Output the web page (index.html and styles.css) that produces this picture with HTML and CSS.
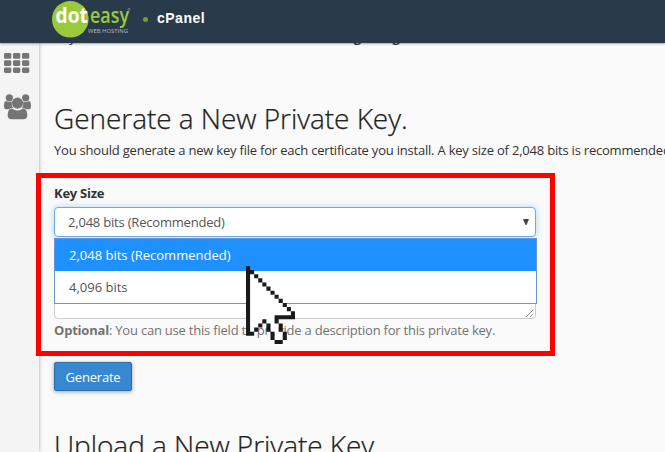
FILE: index.html
```html
<!DOCTYPE html>
<html lang="en">
<head>
    <meta charset="UTF-8">
    <meta name="viewport" content="width=device-width, initial-scale=1.0">
    <title>cPanel - Private Keys</title>
    <link rel="stylesheet" href="styles.css">
</head>
<body>
    <header class="navbar">
        <svg class="logo" width="82" height="40" viewBox="0 0 82 40">
            <circle cx="18.3" cy="19.3" r="18.3" fill="#9aca3c"/>
            <text class="logo-dot" x="3.5" y="22.5" textLength="32.5" lengthAdjust="spacingAndGlyphs">dot</text>
            <text class="logo-easy" x="38" y="22.5" textLength="39" lengthAdjust="spacingAndGlyphs">easy</text>
            <text class="logo-sub" x="36" y="33" textLength="40" lengthAdjust="spacingAndGlyphs">WEB HOSTING</text>
            <circle cx="77" cy="9.3" r="1.1" fill="none" stroke="#7d8790" stroke-width=".8"/>
        </svg>
        <span class="bullet"></span>
        <span class="brand">cPanel</span>
    </header>

    <div class="page">
        <nav class="sidebar">
            <svg width="26" height="21" viewBox="0 0 26 21" fill="#757575">
                <rect x="0" y="0" width="7.3" height="5.8" rx="1.4"/>
                <rect x="9" y="0" width="7.3" height="5.8" rx="1.4"/>
                <rect x="18" y="0" width="7.3" height="5.8" rx="1.4"/>
                <rect x="0" y="7.2" width="7.3" height="5.8" rx="1.4"/>
                <rect x="9" y="7.2" width="7.3" height="5.8" rx="1.4"/>
                <rect x="18" y="7.2" width="7.3" height="5.8" rx="1.4"/>
                <rect x="0" y="14.4" width="7.3" height="5.6" rx="1.4"/>
                <rect x="9" y="14.4" width="7.3" height="5.6" rx="1.4"/>
                <rect x="18" y="14.4" width="7.3" height="5.6" rx="1.4"/>
            </svg>
            <svg class="users" width="27" height="26" viewBox="0 0 27 26" fill="#757575">
                <circle cx="5.3" cy="3.8" r="3.6"/>
                <circle cx="21.7" cy="3.8" r="3.6"/>
                <path d="M2 7.1C3.6 8.4 6 8.4 8 7.4C7.4 9.6 7.8 12 9.2 13.7C7.3 13.8 5.9 14.4 5 15.3H2.8C1 15.3 0 14.4 0 12.7C0 10 .4 7.1 2 7.1Z"/>
                <path d="M25 7.1C23.4 8.4 21 8.4 19 7.4C19.6 9.6 19.2 12 17.8 13.7C19.7 13.8 21.1 14.4 22 15.3H24.2C26 15.3 27 14.4 27 12.7C27 10 26.6 7.1 25 7.1Z"/>
                <circle cx="13.5" cy="9.1" r="5.6"/>
                <path d="M8 14.5C11.3 17 15.7 17 19 14.5C22.3 14.5 23.3 18.2 23.3 21.6C23.3 24 21.8 25.3 19.6 25.3H7.4C5.2 25.3 3.7 24 3.7 21.6C3.7 18.2 4.7 14.5 8 14.5Z"/>
            </svg>
        </nav>

        <main class="content">
            <p class="key-list"><span>Key</span><strong>getting</strong></p>
            <h2>Generate a New Private Key.</h2>
            <p class="intro">You should generate a new key file for each certificate you install. A key size of 2,048 bits is recommended.</p>

            <section class="highlight">
                <label>Key Size</label>
                <div class="select">
                    <span>2,048 bits (Recommended)</span>
                    <svg width="6" height="6" viewBox="0 0 6 6"><path d="M0 0H6L3.5 6H2.5Z" fill="#444"/></svg>
                    <ul class="options">
                        <li class="selected">2,048 bits (Recommended)</li>
                        <li>4,096 bits</li>
                    </ul>
                </div>
                <div class="textarea">
                    <svg width="8" height="8" viewBox="0 0 8 8"><path d="M.5 7.5L7.5.5M4.5 7.5L7.5 4.5" stroke="#555" stroke-dasharray="1.1 .3"/></svg>
                </div>
                <p class="help"><strong>Optional</strong>: You can use this field to provide a description for this private key.</p>
                <svg class="cursor" width="49" height="78" viewBox="0 0 12 19" preserveAspectRatio="none">
                    <path d="M1 1L11 11V12H7V14H8V16H9V18H7V16H6V14H5V13H4V14H3V15H2V16H1Z" fill="#fff"/>
                    <path fill="#1a1a1a" d="M0 0H1V17H0ZM1 1h1v1h-1zM2 2h1v1h-1zM3 3h1v1h-1zM4 4h1v1h-1zM5 5h1v1h-1zM6 6h1v1h-1zM7 7h1v1h-1zM8 8h1v1h-1zM9 9h1v1h-1zM10 10h1v1h-1zM11 11h1v2h-1zM7 12h4v1h-4zM7 13h1v1h-1zM8 14h1v2h-1zM9 16h1v2h-1zM7 18h2v1h-2zM6 16h1v2h-1zM5 14h1v2h-1zM4 13h1v1h-1zM3 14h1v1h-1zM2 15h1v1h-1zM1 16h1v1h-1z"/>
                </svg>
            </section>

            <button class="btn">Generate</button>
            <h2 class="upload">Upload a New Private Key.</h2>
        </main>
    </div>
</body>
</html>
```
FILE: styles.css
```css
* {
    box-sizing: border-box;
    margin: 0;
    padding: 0;
}

body {
    width: 665px;
    height: 452px;
    overflow: hidden;
    background: #fafafa;
    color: #333;
    font-family: "Open Sans", sans-serif;
    font-size: 13px;
    line-height: 20px;
}

.navbar {
    position: relative;
    z-index: 2;
    display: flex;
    height: 43px;
    padding-left: 52px;
    background: #293a4a;
    box-shadow: 0 1px 2px rgba(0, 0, 0, .35);
}

.logo {
    flex: none;
}

.logo text {
    font-family: "Open Sans", sans-serif;
}

.logo-dot {
    fill: #fff;
    font-size: 21px;
    font-weight: 700;
}

.logo-easy {
    fill: #9aca3c;
    font-size: 21px;
    font-weight: 600;
}

.logo-sub {
    fill: #b5bcc3;
    font-size: 5.5px;
}

.bullet {
    width: 5px;
    height: 5px;
    margin: 17px 9px 0 9px;
    border-radius: 50%;
    background: #729f35;
}

.brand {
    margin-top: 8px;
    color: #fff;
    font-family: "Liberation Sans", Arial, sans-serif;
    font-size: 14px;
    font-weight: 700;
    letter-spacing: .5px;
}

.page {
    display: flex;
    height: 409px;
}

.sidebar {
    flex: none;
    width: 39px;
    padding: 10px 0 0 4px;
    background: #f4f4f4;
    box-shadow: 0 0 4px rgba(0, 0, 0, .35);
}

.sidebar svg {
    display: block;
}

.sidebar .users {
    margin-top: 20px;
}

.content {
    flex: 1;
    min-width: 0;
    padding-left: 15px;
    white-space: nowrap;
}

.key-list {
    display: flex;
    gap: 278px;
    height: 20px;
    margin-top: -16px;
}

h2 {
    margin-top: 52px;
    color: #222;
    font-size: 28px;
    font-weight: 300;
    letter-spacing: -.05px;
    line-height: 38px;
    -webkit-text-stroke: .25px #222;
}

.intro {
    margin-top: 3px;
    letter-spacing: -.21px;
}

.highlight {
    position: relative;
    width: 519px;
    height: 183px;
    margin: 13px 0 0 -18px;
    padding: 5px 14px 0 13px;
    border: 5px solid #f00;
}

.highlight label {
    display: block;
    font-weight: 700;
    letter-spacing: -.25px;
}

.select {
    position: relative;
    display: flex;
    align-items: center;
    justify-content: space-between;
    width: 482px;
    height: 30px;
    margin-top: 4px;
    padding: 0 6px 0 13px;
    border: 1px solid #66afe9;
    border-radius: 4px;
    background: #fff;
    box-shadow: 0 0 6px rgba(102, 175, 233, .5);
    color: #555;
    letter-spacing: -.2px;
}

.options {
    position: absolute;
    z-index: 1;
    top: 30px;
    left: -1px;
    width: 483px;
    height: 66px;
    border: 1px solid #7093d3;
    background: #fff;
    letter-spacing: 0;
    list-style: none;
}

.options li {
    height: 32px;
    padding-left: 14px;
    line-height: 32px;
}

.options .selected {
    background: #1e90ff;
    color: #fff;
}

.textarea {
    display: flex;
    align-items: flex-end;
    justify-content: flex-end;
    width: 482px;
    height: 74px;
    margin-top: 8px;
    padding: 1px;
    border: 1px solid #ccc;
    border-radius: 4px;
    background: #fff;
}

.help {
    margin-top: 1px;
    color: #737373;
    letter-spacing: -.21px;
}

.cursor {
    position: absolute;
    z-index: 2;
    top: 88px;
    left: 205px;
}

.btn {
    display: block;
    width: 78px;
    height: 29px;
    margin-top: 6px;
    border: 1px solid #286fae;
    border-radius: 2px;
    background: #3788d0;
    box-shadow: 0 1px 4px rgba(0, 0, 0, .35);
    color: #fff;
    font-family: inherit;
    font-size: 13px;
    letter-spacing: -.2px;
}

.upload {
    margin-top: 35px;
}
```
